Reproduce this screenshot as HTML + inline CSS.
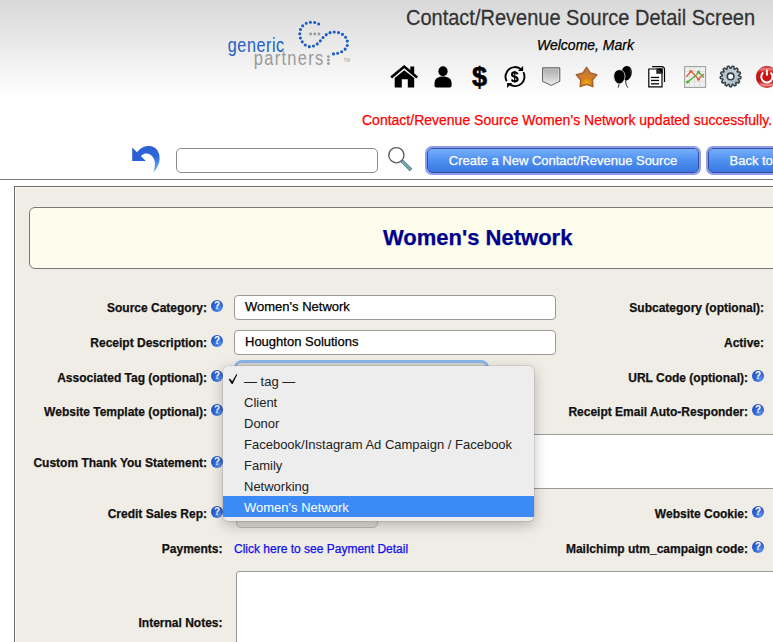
<!DOCTYPE html>
<html><head><meta charset="utf-8">
<style>
html,body{margin:0;padding:0;}
body{width:773px;height:642px;overflow:hidden;position:relative;background:#fff;font-family:"Liberation Sans",sans-serif;}
.a{position:absolute;}
.t{position:absolute;white-space:nowrap;line-height:1;-webkit-text-stroke:0.25px currentColor;}
.hdr{left:0;top:0;width:773px;height:100px;background:linear-gradient(#d8d8d8,#ffffff 97%);}
.lb{font-size:12px;font-weight:bold;color:#111;text-align:right;}
.q{position:absolute;width:12px;height:12px;border-radius:50%;background:radial-gradient(circle at 65% 75%,#5a9af0 0%,#2f62d2 45%,#1d46b8 100%);}
.q::after{content:"?";position:absolute;left:0;top:0;width:12px;height:12px;line-height:12px;text-align:center;color:#fff;font-weight:bold;font-size:10px;}
.inp{position:absolute;background:#fff;border:1px solid #9a9a9a;border-radius:4px;box-sizing:border-box;}
.btn{position:absolute;box-sizing:border-box;border:1px solid #3a4a9a;border-radius:5px;box-shadow:0 0 0 2px #8d9cf0;background:linear-gradient(#76b0fa,#4f8ff0 50%,#3a78e2);color:#fff;font-size:13px;}
.opt{position:absolute;left:0;width:311px;height:21px;font-size:13px;color:#222;}
.opt span{position:absolute;left:21px;top:4.5px;line-height:1;white-space:nowrap;}
</style></head>
<body>
<div class="a hdr"></div>

<!-- logo -->
<svg class="a" style="left:220px;top:15px" width="140" height="60" viewBox="0 0 140 60">
  <path d="M98.7 9 C95 6.5 87 6 82.5 11 C78 16 79 26 86 30.5 C92 34 98 29 101 25 C105 19.5 110 16.5 115 17 C122 17.5 128 22 127.5 29 C127 35 120 39.5 109 39" fill="none" stroke="#1d5bc6" stroke-width="3.1" stroke-linecap="round" stroke-dasharray="0 4.3"/>
  <circle cx="90.6" cy="19" r="1.45" fill="#9a9a9a"/><circle cx="94.8" cy="19" r="1.45" fill="#9a9a9a"/><circle cx="99" cy="19" r="1.45" fill="#9a9a9a"/>
  <circle cx="108.4" cy="41.6" r="1.45" fill="#9a9a9a"/><circle cx="108.4" cy="45.1" r="1.45" fill="#9a9a9a"/><circle cx="108.4" cy="48.6" r="1.45" fill="#9a9a9a"/>
  <text transform="translate(7.8,37.2) scale(1,1.22)" font-family="Liberation Sans" font-size="16.2" fill="#2160c4" textLength="57" lengthAdjust="spacing" letter-spacing="0.6">generic</text>
  <text transform="translate(33.8,49.9) scale(1,1.25)" font-family="Liberation Sans" font-size="16.5" fill="#9a9a9a" textLength="70" lengthAdjust="spacing" letter-spacing="0.6">partners</text>
  <text x="123.5" y="46.5" font-family="Liberation Sans" font-size="4.5" fill="#999">TM</text>
</svg>

<div class="t" style="left:406px;top:8.3px;font-size:20px;color:#333;transform:scaleY(1.075);transform-origin:0 17px">Contact/Revenue Source Detail Screen</div>
<div class="t" style="left:537px;top:38px;font-size:14px;font-style:italic;color:#000">Welcome, Mark</div>

<!-- icons -->
<svg class="a" style="left:385px;top:58px" width="388" height="36" viewBox="0 0 388 36">
  <defs>
    <linearGradient id="sh" x1="0" y1="0" x2="0" y2="1"><stop offset="0" stop-color="#a8a8a8"/><stop offset="1" stop-color="#ececec"/></linearGradient>
    <radialGradient id="st" cx="0.5" cy="0.82" r="0.6"><stop offset="0" stop-color="#f6b012"/><stop offset="0.45" stop-color="#d7801e"/><stop offset="1" stop-color="#c27a3c"/></radialGradient>
    <linearGradient id="gr" x1="0" y1="0" x2="1" y2="1"><stop offset="0" stop-color="#9fb0bc"/><stop offset="0.5" stop-color="#c3d1da"/><stop offset="1" stop-color="#95a8b5"/></linearGradient>
    <linearGradient id="pwh" x1="0" y1="0" x2="0" y2="1"><stop offset="0" stop-color="#ff8080" stop-opacity="0.2"/><stop offset="0.12" stop-color="#ffb0b0" stop-opacity="0.75"/><stop offset="0.3" stop-color="#ff6060" stop-opacity="0"/><stop offset="0.7" stop-color="#ff6060" stop-opacity="0"/><stop offset="0.9" stop-color="#ffc0c0" stop-opacity="0.8"/><stop offset="1" stop-color="#ff8080" stop-opacity="0.2"/></linearGradient>
  </defs>
  <!-- home -->
  <path d="M7.2 18.6 L19.2 8.6 L31.2 18.6" fill="none" stroke="#000" stroke-width="2.6" stroke-linecap="square" stroke-linejoin="miter"/>
  <rect x="25.3" y="8.5" width="3.9" height="6.5" fill="#000"/>
  <path d="M9.7 20 L19.2 12.3 L29.2 20 L29.2 29.6 L22.8 29.6 L22.8 21.3 L16.8 21.3 L16.8 29.6 L9.7 29.6 Z" fill="#000"/>
  <!-- person -->
  <ellipse cx="58" cy="13.2" rx="4.6" ry="5" fill="#000"/>
  <path d="M58 18.5 C53 18.5 49.5 20.5 49.5 25.5 L49.5 27.5 C49.5 29 50.5 29.6 52 29.6 L64 29.6 C65.5 29.6 66.6 29 66.6 27.5 L66.6 25.5 C66.6 20.5 63 18.5 58 18.5 Z" fill="#000"/>
  <!-- refresh dollar -->
  <path d="M121.7 23.2 A9.5 9.5 0 0 1 135.6 10.9" fill="none" stroke="#000" stroke-width="1.9"/>
  <path d="M138.4 14.1 A9.5 9.5 0 0 1 124.2 26.1" fill="none" stroke="#000" stroke-width="1.9"/>
  <path d="M138.1 7.9 L138.1 13 L133 13 Z" fill="#000"/>
  <path d="M122.1 25 L127.1 25 L122.1 30 Z" fill="#000"/>
  <rect x="129.1" y="13" width="1.3" height="11.6" fill="#000"/>
  <path d="M132.6 16.2 C132.2 14.9 131.2 14.4 129.7 14.4 C128 14.4 127 15.3 127 16.6 C127 18 128.3 18.5 129.7 18.8 C131.3 19.1 132.6 19.7 132.6 21.2 C132.6 22.6 131.4 23.3 129.7 23.3 C128.2 23.3 127.1 22.7 126.7 21.5" fill="none" stroke="#000" stroke-width="2.1"/>
  <!-- shield -->
  <path d="M157.6 9.8 H174.8 V23.3 L166.2 27.4 L157.6 23.3 Z" fill="url(#sh)" stroke="#5a5a5a" stroke-width="1"/>
  <path d="M158.8 11 H173.6 V22.6 L166.2 26.1 L158.8 22.6 Z" fill="none" stroke="#f4f4f4" stroke-width="0.6" opacity="0.7"/>
  <!-- star -->
  <path d="M201.60 9.30 L205.24 14.98 L211.78 16.69 L207.50 21.92 L207.89 28.66 L201.60 26.20 L195.31 28.66 L195.70 21.92 L191.42 16.69 L197.96 14.98 Z" fill="url(#st)" stroke="#a8642c" stroke-width="1.5" stroke-linejoin="round"/>
  <!-- balloons -->
  <path d="M234 25.9 C234 27.5 233.6 28.6 233.1 29.5" fill="none" stroke="#111" stroke-width="0.9"/>
  <path d="M240.8 22.2 C240.5 25 240.9 27.3 243 29.6" fill="none" stroke="#111" stroke-width="0.9"/>
  <path d="M241.9 8 C245.2 8 247 11 246.8 14.6 C246.6 18.6 244 22.4 241.3 22.4 C238.5 22.4 236.5 18.6 236.6 14.6 C236.8 11 238.6 8 241.9 8 Z" fill="#000"/>
  <path d="M244.5 10.5 C245.8 12 246 14 245.6 15.8" fill="none" stroke="#777" stroke-width="0.5"/>
  <path d="M234.4 11.7 C238 11.7 240 14.8 240 18.3 C240 22.3 237 25.9 234.2 25.9 C231.4 25.9 228.8 22.3 228.8 18.3 C228.8 14.8 230.8 11.7 234.4 11.7 Z" fill="#000" stroke="#e8e8e8" stroke-width="0.8"/>
  <!-- docs -->
  <path d="M267.1 8.6 H276.5 Q279.5 8.6 279.5 11.6 V24" fill="none" stroke="#000" stroke-width="1.2"/>
  <path d="M263.8 11 H277 V28.8 H263.8 Z" fill="#fff" stroke="#000" stroke-width="1.2"/>
  <path d="M271.3 10.5 H277.5 V15.8 Z" fill="#000"/>
  <path d="M271.3 10.5 V15.8 H277.5" fill="#222"/>
  <rect x="266" y="18.8" width="8.1" height="1.3" fill="#000"/>
  <rect x="266" y="21.8" width="8.1" height="1.3" fill="#000"/>
  <rect x="266" y="25.2" width="8.1" height="1.3" fill="#000"/>
  <!-- chart -->
  <rect x="299.6" y="8.6" width="21" height="20.8" fill="#f0f0f0" stroke="#9a9a9a" stroke-width="1"/>
  <path d="M300 13.5 H320 M300 18.5 H320 M300 23.5 H320 M304.5 9 V29 M309.5 9 V29 M314.5 9 V29" stroke="#d8d8d8" stroke-width="0.7"/>
  <polyline points="301.3,18.7 306,13.3 313.5,21.2 318.8,15.9" fill="none" stroke="#e0604a" stroke-width="1.4"/>
  <polyline points="302.5,24 310.4,18 313.5,14 318.8,19.4" fill="none" stroke="#5caa3a" stroke-width="1.4"/>
  <circle cx="306" cy="13.3" r="1.5" fill="#e0604a"/><circle cx="313.5" cy="21.2" r="1.5" fill="#e0604a"/>
  <circle cx="302.5" cy="24" r="1.6" fill="#5caa3a"/><circle cx="313.5" cy="14" r="1.5" fill="#5caa3a"/>
  <!-- gear -->
  <g transform="translate(345.6,18.4)">
    <path d="M0.20 -8.10 L1.65 -10.27 L3.31 -9.86 L3.59 -7.26 L3.94 -7.08 L6.23 -8.32 L7.51 -7.19 L6.55 -4.76 L6.78 -4.44 L9.39 -4.47 L9.99 -2.88 L8.02 -1.17 L8.06 -0.78 L10.39 0.40 L10.19 2.10 L7.64 2.69 L7.50 3.05 L9.02 5.19 L8.05 6.59 L5.52 5.93 L5.22 6.19 L5.57 8.78 L4.06 9.57 L2.13 7.82 L1.75 7.91 L0.85 10.36 L-0.85 10.36 L-1.75 7.91 L-2.13 7.82 L-4.06 9.57 L-5.57 8.78 L-5.22 6.19 L-5.52 5.93 L-8.05 6.59 L-9.02 5.19 L-7.50 3.05 L-7.64 2.69 L-10.19 2.10 L-10.39 0.40 L-8.06 -0.78 L-8.02 -1.17 L-9.99 -2.88 L-9.39 -4.47 L-6.78 -4.44 L-6.55 -4.76 L-7.51 -7.19 L-6.23 -8.32 L-3.94 -7.08 L-3.59 -7.26 L-3.31 -9.86 L-1.65 -10.27 L-0.20 -8.10 Z" fill="url(#gr)" stroke="#343c42" stroke-width="1.45" stroke-linejoin="round"/>
    <circle cx="0" cy="0" r="3.3" fill="#fafafa" stroke="#343c42" stroke-width="1.6"/>
  </g>
  <!-- power -->
  <circle cx="381.9" cy="18.9" r="10.6" fill="#c81414" stroke="#b00808" stroke-width="0.6"/>
  <circle cx="381.9" cy="18.9" r="10.4" fill="url(#pwh)"/>
  <path d="M378.3 14.6 A5.6 5.6 0 1 0 385.5 14.6" fill="none" stroke="#fff" stroke-width="1.9"/>
  <line x1="381.9" y1="11.6" x2="381.9" y2="17.6" stroke="#fff" stroke-width="1.9"/>
</svg>

<div class="t" style="left:472px;top:64px;font-size:27px;font-weight:bold;color:#000;-webkit-text-stroke:0.6px #000">$</div>
<div class="t" style="left:362px;top:112.9px;font-size:14px;color:#f00">Contact/Revenue Source Women’s Network updated successfully.</div>

<!-- undo -->
<svg class="a" style="left:125px;top:140px" width="40" height="36" viewBox="0 0 40 36">
  <defs><linearGradient id="ug" x1="0" y1="0" x2="0.3" y2="1"><stop offset="0" stop-color="#2c5ed4"/><stop offset="0.6" stop-color="#2f66da"/><stop offset="1" stop-color="#5aa8f4"/></linearGradient></defs>
  <path d="M7.2 7.5 L7.2 21 L20.9 21 Z" fill="#2c5ed4"/>
  <path d="M11.5 13 C15 7.5 20.5 5.8 25 6 C31 6.5 35 12 34.6 19 C34.2 25 31.5 29 28.5 32 C30 27 30.6 22 28.6 18.3 C26.6 14.5 22.5 12.8 19 14 C17.2 14.6 16.2 15.6 15.5 16.8 Z" fill="url(#ug)"/>
</svg>
<div class="inp" style="left:176px;top:148px;width:202px;height:25px;border-radius:5px;border-color:#8c8c8c"></div>
<!-- magnifier -->
<svg class="a" style="left:384px;top:144px" width="32" height="32" viewBox="0 0 32 32">
  <line x1="17.6" y1="16.6" x2="27" y2="26" stroke="#3f6670" stroke-width="3.4" stroke-linecap="butt"/>
  <line x1="17.6" y1="16.6" x2="27" y2="26" stroke="#79a9b5" stroke-width="2.2" stroke-linecap="butt"/>
  <circle cx="12.4" cy="11.2" r="7.6" fill="none" stroke="#5a5a5a" stroke-width="1.35"/>
</svg>
<div class="btn" style="left:427px;top:148px;width:272px;height:25px;"><div class="t" style="left:0;width:270px;text-align:center;top:5.2px">Create a New Contact/Revenue Source</div></div>
<div class="btn" style="left:708px;top:148px;width:120px;height:25px;"><div class="t" style="left:20.5px;top:5.2px">Back to List</div></div>

<div class="a" style="left:0;top:179px;width:773px;height:1px;background:#7a7a7a"></div>

<!-- content box -->
<div class="a" style="left:14px;top:186px;width:1000px;height:600px;box-sizing:border-box;border:1px solid #6c6c6c;background:#f0ede6;box-shadow:inset 1px 1px 0 #fbf9ef"></div>
<div class="a" style="left:29px;top:207px;width:900px;height:62px;box-sizing:border-box;border:1px solid #777;border-radius:6px;background:#fdfdee"></div>
<div class="t" style="left:383px;top:226.6px;font-size:22px;font-weight:bold;color:#00008b">Women's Network</div>

<!-- left labels -->
<div class="t lb" style="right:566px;top:301.8px">Source Category:</div>
<div class="q" style="left:211px;top:300px"></div>
<div class="t lb" style="right:566px;top:337px">Receipt Description:</div>
<div class="q" style="left:211px;top:335px"></div>
<div class="t lb" style="right:566px;top:371.8px">Associated Tag (optional):</div>
<div class="q" style="left:211px;top:370px"></div>
<div class="t lb" style="right:566px;top:405.8px">Website Template (optional):</div>
<div class="q" style="left:211px;top:404px"></div>
<div class="t lb" style="right:566px;top:457.3px">Custom Thank You Statement:</div>
<div class="q" style="left:211px;top:456px"></div>
<div class="t lb" style="right:566px;top:507.8px">Credit Sales Rep:</div>
<div class="q" style="left:211px;top:506px"></div>
<div class="t lb" style="right:550.5px;top:542.5px">Payments:</div>
<div class="t lb" style="right:550.5px;top:616.6px">Internal Notes:</div>

<!-- right labels -->
<div class="t lb" style="right:9px;top:301.8px">Subcategory (optional):</div>
<div class="t lb" style="right:9px;top:337px">Active:</div>
<div class="t lb" style="right:25px;top:372.2px">URL Code (optional):</div>
<div class="q" style="left:752px;top:370.3px"></div>
<div class="t lb" style="right:25px;top:405.8px">Receipt Email Auto-Responder:</div>
<div class="q" style="left:752px;top:404px"></div>
<div class="t lb" style="right:25px;top:507.8px">Website Cookie:</div>
<div class="q" style="left:752px;top:506px"></div>
<div class="t lb" style="right:25px;top:543px">Mailchimp utm_campaign code:</div>
<div class="q" style="left:752px;top:541px"></div>

<!-- inputs -->
<div class="inp" style="left:234px;top:295px;width:322px;height:25px"><div class="t" style="left:10px;top:4.3px;font-size:13px;color:#000">Women's Network</div></div>
<div class="inp" style="left:234px;top:330px;width:322px;height:25px"><div class="t" style="left:10px;top:4.3px;font-size:13px;color:#000">Houghton Solutions</div></div>
<!-- select with focus ring -->
<div class="a" style="left:236.5px;top:363px;width:249px;height:22px;border-radius:5px;box-shadow:0 0 0 3px #8ab6ea;background:linear-gradient(#d8d4cf,#e8e5e0)"></div>
<!-- custom thank you textarea -->
<div class="a" style="left:236px;top:434px;width:600px;height:55px;box-sizing:border-box;border:1px solid #9a9a9a;border-radius:3px;background:#fff"></div>
<!-- credit sales rep select -->
<div class="a" style="left:236px;top:503px;width:142px;height:25px;box-sizing:border-box;border:1px solid #bdb9b2;border-radius:5px;background:linear-gradient(#f0ede8,#e2ded8)"></div>
<div class="t" style="left:234px;top:542.5px;font-size:12px;color:#1010ee">Click here to see Payment Detail</div>
<!-- internal notes textarea -->
<div class="a" style="left:236px;top:571px;width:600px;height:100px;box-sizing:border-box;border:1px solid #9a9a9a;border-radius:3px;background:#fff"></div>

<!-- dropdown popup -->
<div class="a" style="left:223px;top:366px;width:311px;height:155px;border-radius:5px;background:#ededed;box-shadow:0 4px 14px rgba(0,0,0,0.26),0 0 0 0.5px rgba(0,0,0,0.16);overflow:hidden">
  <div class="opt" style="top:4px"><svg style="position:absolute;left:0;top:0" width="20" height="21" viewBox="223 370 20 21"><path d="M228.7 379.4 L229.9 378.5 L232.2 381.3 L236.4 374.1 L237.3 374.6 L232.7 383.9 L231.7 383.9 Z" fill="#111"/></svg><span>— tag —</span></div>
  <div class="opt" style="top:25px"><span>Client</span></div>
  <div class="opt" style="top:46px"><span>Donor</span></div>
  <div class="opt" style="top:67px"><span>Facebook/Instagram Ad Campaign / Facebook</span></div>
  <div class="opt" style="top:88px"><span>Family</span></div>
  <div class="opt" style="top:109px"><span>Networking</span></div>
  <div class="opt" style="top:130px;background:#3b8af6;color:#fff"><span>Women's Network</span></div>
</div>


</body></html>
